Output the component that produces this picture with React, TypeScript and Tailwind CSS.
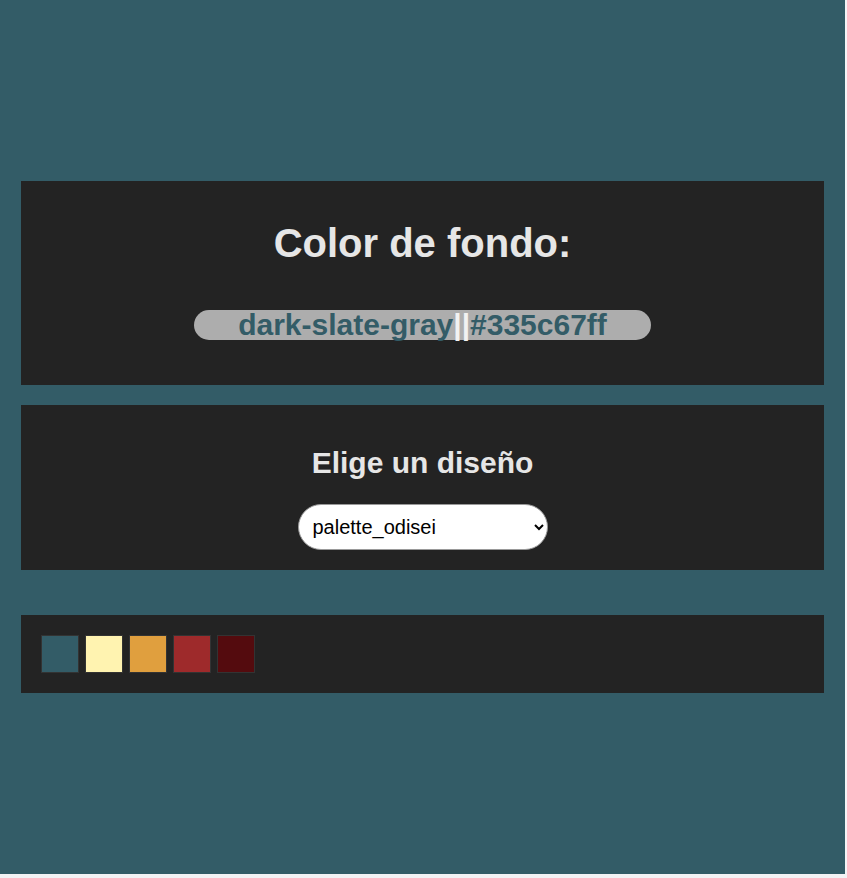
import React from "react";

const swatches = ["#335c67", "#fff3b0", "#e09f3e", "#9e2a2b", "#540b0e"];

export default function App() {
  return (
    <div className="min-h-screen bg-[#f3f3f5] font-['Liberation_Sans',Arial,sans-serif]">
      <div className="w-[845px] h-[874px] bg-[#335c67] px-[21px] pt-[181px]">
        {/* Background color */}
        <section className="bg-[#232323] h-[204px] flex flex-col items-center pt-[40px]">
          <h1 className="text-[40px] leading-[45px] font-bold text-[#e6e6e6]">
            Color de fondo:
          </h1>
          <div className="mt-[44px] w-[457px] h-[30px] rounded-full bg-[#adadad] text-center text-[30px] leading-[30px] font-bold text-[#335c67] whitespace-nowrap">
            dark-slate-gray<span className="text-[#f2f2f2]">||</span>#335c67ff
          </div>
        </section>

        {/* Palette picker */}
        <section className="mt-[20px] bg-[#232323] h-[165px] flex flex-col items-center pt-[41px]">
          <h2 className="text-[30px] leading-[34px] font-bold text-[#e6e6e6]">
            Elige un diseño
          </h2>
          <select
            defaultValue="palette_odisei"
            className="mt-[24px] w-[250px] h-[46px] rounded-full bg-white border border-[#999] pl-[10px] pr-[8px] text-[20px] text-black"
          >
            <option value="palette_odisei">palette_odisei</option>
          </select>
        </section>

        {/* Swatches */}
        <section className="mt-[45px] bg-[#232323] h-[78px] flex items-center gap-[6px] px-[20px]">
          {swatches.map((c) => (
            <div
              key={c}
              className="w-[38px] h-[38px] border border-[#333]"
              style={{ backgroundColor: c }}
            />
          ))}
        </section>
      </div>
    </div>
  );
}
